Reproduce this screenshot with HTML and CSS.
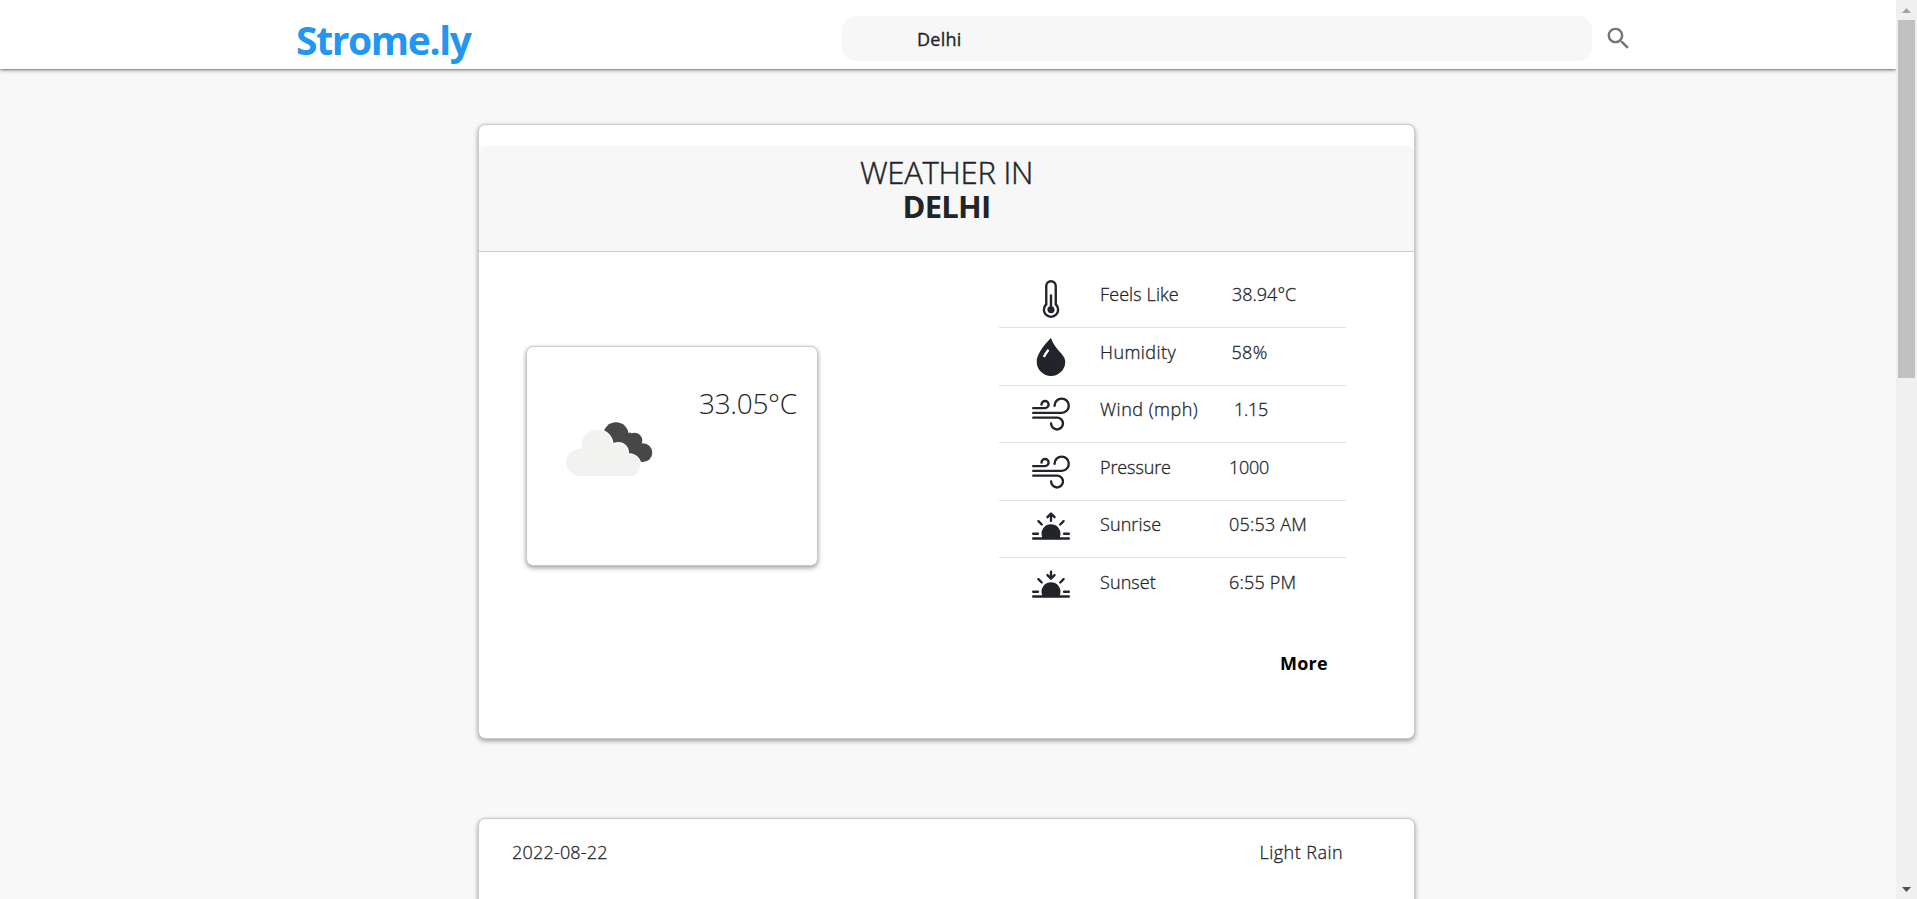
FILE: index.html
```html
<!DOCTYPE html>
<html lang="en">
<head>
<meta charset="utf-8">
<title>Strome.ly</title>
<link rel="stylesheet" href="styles.css">
</head>
<body>
<svg class="defs" width="0" height="0">
  <symbol id="wind" viewBox="0 0 16 16"><path d="M12.5 2A2.5 2.5 0 0 0 10 4.5a.5.5 0 0 1-1 0A3.5 3.5 0 1 1 12.5 8H.5a.5.5 0 0 1 0-1h12a2.5 2.5 0 0 0 0-5zm-7 1a1 1 0 0 0-1 1 .5.5 0 0 1-1 0 2 2 0 1 1 2 2h-5a.5.5 0 0 1 0-1h5a1 1 0 0 0 0-2zM0 9.5A.5.5 0 0 1 .5 9h10.042a3 3 0 1 1-3 3 .5.5 0 0 1 1 0 2 2 0 1 0 2-2H.5a.5.5 0 0 1-.5-.5z"/></symbol>
  <symbol id="sun" viewBox="0 0 16 16"><path d="M2.343 4.343a.5.5 0 0 1 .707 0l1.414 1.414a.5.5 0 0 1-.707.707L2.343 5.05a.5.5 0 0 1 0-.707zm11.314 0a.5.5 0 0 1 0 .707l-1.414 1.414a.5.5 0 1 1-.707-.707l1.414-1.414a.5.5 0 0 1 .707 0zM11.709 11.5a4 4 0 1 0-7.418 0H.5a.5.5 0 0 0 0 1h15a.5.5 0 0 0 0-1h-3.79zM0 10a.5.5 0 0 1 .5-.5h2a.5.5 0 0 1 0 1h-2A.5.5 0 0 1 0 10zm13 0a.5.5 0 0 1 .5-.5h2a.5.5 0 0 1 0 1h-2a.5.5 0 0 1-.5-.5z"/></symbol>
</svg>
<div class="window">
  <div class="page">
    <header class="navbar">
      <div class="brand">Strome.ly</div>
      <div class="search">Delhi</div>
      <svg class="search-icon" viewBox="0 0 24 24"><path d="M15.5 14h-.79l-.28-.27C15.41 12.59 16 11.11 16 9.5 16 5.91 13.09 3 9.5 3S3 5.91 3 9.5 5.91 16 9.5 16c1.61 0 3.09-.59 4.23-1.57l.27.28v.79l5 4.99L20.49 19l-4.99-5zm-6 0C7.01 14 5 11.99 5 9.5S7.01 5 9.5 5 14 7.01 14 9.5 11.99 14 9.5 14z"/></svg>
    </header>
    <main class="content">
      <section class="card weather">
        <div class="weather-head">
          <div class="head-label">WEATHER IN</div>
          <div class="head-city">DELHI</div>
        </div>
        <div class="weather-body">
          <div class="card now">
            <svg class="cloud" viewBox="153 275 261 165">
              <g fill="#484849"><circle cx="303" cy="314" r="38"/><circle cx="358" cy="331" r="24"/><circle cx="384" cy="367" r="28"/><path d="M300 340L345 306L378 340L384 395L340 385Z"/></g>
              <g fill="#f2f2f0" stroke="#fff" stroke-width="8" paint-order="stroke"><circle cx="246" cy="345" r="46"/><circle cx="310" cy="367" r="28"/><circle cx="343" cy="405" r="32"/></g>
              <g fill="#f2f2f0"><circle cx="194" cy="396" r="41"/><circle cx="246" cy="345" r="46"/><circle cx="310" cy="367" r="28"/><circle cx="343" cy="405" r="32"/><path d="M194 370L246 340L310 360L343 390V437H194Z"/></g>
            </svg>
            <div class="temp">33.05°C</div>
          </div>
          <div class="details">
            <div class="row"><svg class="icon" viewBox="0 0 16 16"><path d="M9.5 12.5a1.5 1.5 0 1 1-2-1.415V6.5a.5.5 0 0 1 1 0v4.585a1.5 1.5 0 0 1 1 1.415z"/><path d="M5.5 2.5a2.5 2.5 0 0 1 5 0v7.55a3.5 3.5 0 1 1-5 0V2.5zM8 1a1.5 1.5 0 0 0-1.5 1.5v7.987l-.167.15a2.5 2.5 0 1 0 3.333 0l-.166-.15V2.5A1.5 1.5 0 0 0 8 1z"/></svg><span class="name">Feels Like</span><span class="value v-feels">38.94°C</span></div>
            <div class="row"><svg class="icon" viewBox="0 0 16 16"><path fill-rule="evenodd" d="M8 16a6 6 0 0 0 6-6c0-1.655-1.122-2.904-2.432-4.362C10.254 4.176 8.75 2.503 8 0c0 0-6 5.686-6 10a6 6 0 0 0 6 6ZM6.646 4.646l.708.708c-.29.29-1.128 1.311-1.907 2.87l-.894-.448c.82-1.641 1.717-2.753 2.093-3.13Z"/></svg><span class="name humidity">Humidity</span><span class="value v-humidity">58%</span></div>
            <div class="row"><svg class="icon"><use href="#wind"/></svg><span class="name wind">Wind (mph)</span><span class="value v-wind">1.15</span></div>
            <div class="row"><svg class="icon"><use href="#wind"/></svg><span class="name pressure">Pressure</span><span class="value v-pressure">1000</span></div>
            <div class="row"><svg class="icon" viewBox="0 0 16 16"><use href="#sun"/><path d="M7.646 1.146a.5.5 0 0 1 .708 0l1.5 1.5a.5.5 0 0 1-.708.708L8.5 2.707V4.5a.5.5 0 0 1-1 0V2.707l-.646.647a.5.5 0 1 1-.708-.708l1.5-1.5z"/></svg><span class="name">Sunrise</span><span class="value v-time">05:53 AM</span></div>
            <div class="row"><svg class="icon" viewBox="0 0 16 16"><use href="#sun"/><path d="M7.646 4.854a.5.5 0 0 0 .708 0l1.5-1.5a.5.5 0 0 0-.708-.708l-.646.647V1.5a.5.5 0 0 0-1 0v1.793l-.646-.647a.5.5 0 1 0-.708.708l1.5 1.5z"/></svg><span class="name">Sunset</span><span class="value v-time">6:55 PM</span></div>
            <div class="more">More</div>
          </div>
        </div>
      </section>
      <section class="card forecast">
        <span class="date">2022-08-22</span>
        <span class="condition">Light Rain</span>
      </section>
    </main>
  </div>
  <div class="scrollbar">
    <svg class="arrow" viewBox="0 0 21 20"><path fill="#a3a3a3" d="M6 13L10.500 8L15 13Z"/></svg>
    <div class="thumb"></div>
    <svg class="arrow last" viewBox="0 0 21 20"><path fill="#505050" d="M6 8L10.500 13L15 8Z"/></svg>
  </div>
</div>
</body>
</html>
```
FILE: styles.css
```css
* { box-sizing: border-box; }
body {
  margin: 0;
  overflow: hidden;
  background: #f8f8f8;
  color: #212529;
  font-family: "Open Sans", "Noto Sans", sans-serif;
  font-size: 18px;
  line-height: 24px;
  font-weight: 300;
  white-space: nowrap;
}
.name, .value, .date, .condition { -webkit-text-stroke: .3px #212529; }
.defs { display: block; }
.window { display: flex; height: 899px; }
.page { flex: 1; min-width: 0; overflow: hidden; }

.navbar {
  display: flex;
  align-items: flex-start;
  height: 69px;
  padding-left: 296px;
  background: #fff;
  box-shadow: 0 1px 4px rgba(0, 0, 0, .48), 0 1px 1px rgba(0, 0, 0, .15);
}
.brand {
  width: 546px;
  padding-top: 15px;
  font-size: 39px;
  line-height: 50px;
  font-weight: 700;
  letter-spacing: -1.35px;
  color: #2196f3;
}
.search {
  width: 750px;
  height: 45px;
  margin-top: 16px;
  padding: 11px 0 0 75px;
  border-radius: 14px;
  background: #f7f7f7;
  font-weight: 400;
  letter-spacing: .25px;
  -webkit-text-stroke: .35px #212529;
}
.search-icon {
  width: 29px;
  height: 29px;
  margin: 24px 0 0 12px;
  fill: #757575;
}

.content { padding: 55px 0 0 478px; }
.card {
  border: 1px solid #c9c9c9;
  border-radius: 7px;
  background: #fff;
  background-clip: padding-box;
  box-shadow: 0 2px 5px rgba(0, 0, 0, .38);
}
.weather { width: 937px; height: 615px; padding-top: 21px; }
.weather-head {
  height: 106px;
  padding-top: 9px;
  border-bottom: 1px solid #c9c9c9;
  border-radius: 6px 6px 0 0;
  background: #f7f7f7;
  text-align: center;
  font-size: 31px;
  line-height: 34px;
}
.head-label { letter-spacing: -.25px; -webkit-text-stroke: .45px #212529; }
.head-city { font-weight: 700; letter-spacing: -.8px; }
.weather-body { display: flex; }
.now {
  display: flex;
  width: 292px;
  height: 220px;
  margin: 94px 0 0 47px;
}
.cloud { width: 87px; height: 55px; margin: 75px 0 0 39px; }
.temp {
  margin: 37px 0 0 46px;
  font-size: 28px;
  line-height: 38px;
  letter-spacing: -.3px;
}
.details { width: 347px; margin: 18.500px 0 0 181px; }
.row {
  display: flex;
  height: 57.500px;
  padding-left: 33px;
  border-bottom: 1px solid #dee2e6;
}
.row:nth-child(6) { border-bottom-color: transparent; }
.icon { width: 38px; height: 38px; margin-top: 9.500px; fill: #212529; }
.name { width: 129px; margin: 11.500px 0 0 30px; letter-spacing: .1px; }
.humidity { letter-spacing: .45px; }
.wind { letter-spacing: .5px; }
.pressure { letter-spacing: -.1px; }
.value { margin-top: 11.500px; }
.v-feels { padding-left: 3px; }
.v-humidity { padding-left: 2.500px; letter-spacing: .3px; }
.v-wind { padding-left: 5px; letter-spacing: -.3px; }
.v-pressure { letter-spacing: -.3px; }
.v-time { letter-spacing: .2px; }
.more {
  padding: 35.500px 0 0 281px;
  font-weight: 700;
  letter-spacing: .2px;
  color: #000;
}
.forecast {
  display: flex;
  justify-content: space-between;
  width: 937px;
  height: 300px;
  margin-top: 79px;
  padding: 21px 71px 0 33px;
}
.date { letter-spacing: .2px; }
.condition { letter-spacing: .45px; }

.scrollbar {
  display: flex;
  flex-direction: column;
  width: 21px;
  background: #f0f0f0;
}
.arrow { width: 21px; height: 20px; }
.thumb { width: 17px; height: 358px; margin-left: 2px; background: #c1c1c1; }
.last { margin-top: auto; }
```
